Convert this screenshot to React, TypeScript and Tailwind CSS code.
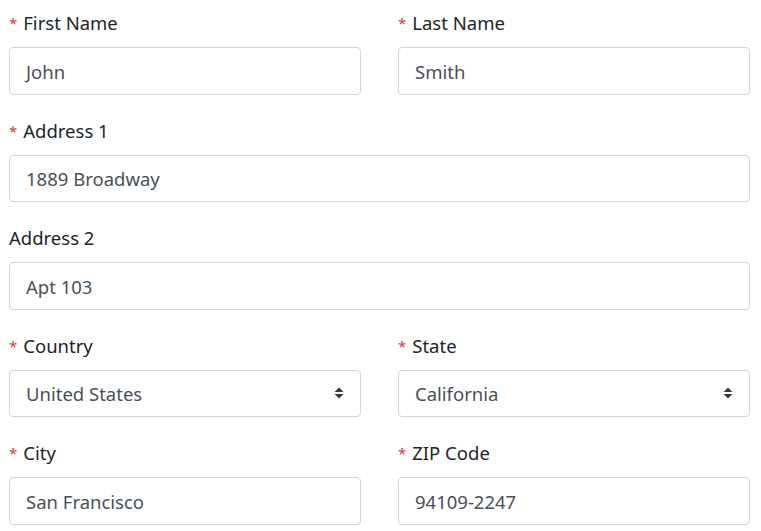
import { type ReactNode } from 'react';

function Label({ required, children }: { required?: boolean; children: ReactNode }) {
  return (
    <label className="mb-[10px] flex h-[28px] items-center text-[18.5px] leading-[28px] text-[#212529]">
      {required ? <span className="mr-[6px] text-[15px] text-[#dc3545]">*</span> : null}
      {children}
    </label>
  );
}

const boxClass =
  'flex h-[47.5px] w-full items-center rounded-[4px] border border-[#ced4da] bg-white pl-[16px] pr-[15px] pt-[2px] text-[18.5px] text-[#495057]';

function Field({ label, value, required }: { label: string; value: string; required?: boolean }) {
  return (
    <div className="mb-[22px] flex flex-col">
      <Label required={required}>{label}</Label>
      <div className={boxClass}>{value}</div>
    </div>
  );
}

function SelectField({ label, value, required }: { label: string; value: string; required?: boolean }) {
  return (
    <div className="mb-[22px] flex flex-col">
      <Label required={required}>{label}</Label>
      <div className={boxClass + ' justify-between'}>
        <span>{value}</span>
        <svg width="10" height="12" viewBox="0 0 10 12" className="-mt-[2px] mr-[1px]">
          <path d="M5 0.5 L9.5 5 L0.5 5 Z" fill="#343a40" />
          <path d="M5 11.5 L9.5 7 L0.5 7 Z" fill="#343a40" />
        </svg>
      </div>
    </div>
  );
}

export default function App() {
  return (
    <div className="min-h-screen bg-white pl-[9px] pt-[9px] font-['Noto_Sans',sans-serif]">
      <div className="w-[741px]">
        <div className="grid grid-cols-2 gap-x-[37px]">
          <Field required label="First Name" value="John" />
          <Field required label="Last Name" value="Smith" />
        </div>
        <Field required label="Address 1" value="1889 Broadway" />
        <Field label="Address 2" value="Apt 103" />
        <div className="grid grid-cols-2 gap-x-[37px]">
          <SelectField required label="Country" value="United States" />
          <SelectField required label="State" value="California" />
        </div>
        <div className="grid grid-cols-2 gap-x-[37px]">
          <Field required label="City" value="San Francisco" />
          <Field required label="ZIP Code" value="94109-2247" />
        </div>
      </div>
    </div>
  );
}
